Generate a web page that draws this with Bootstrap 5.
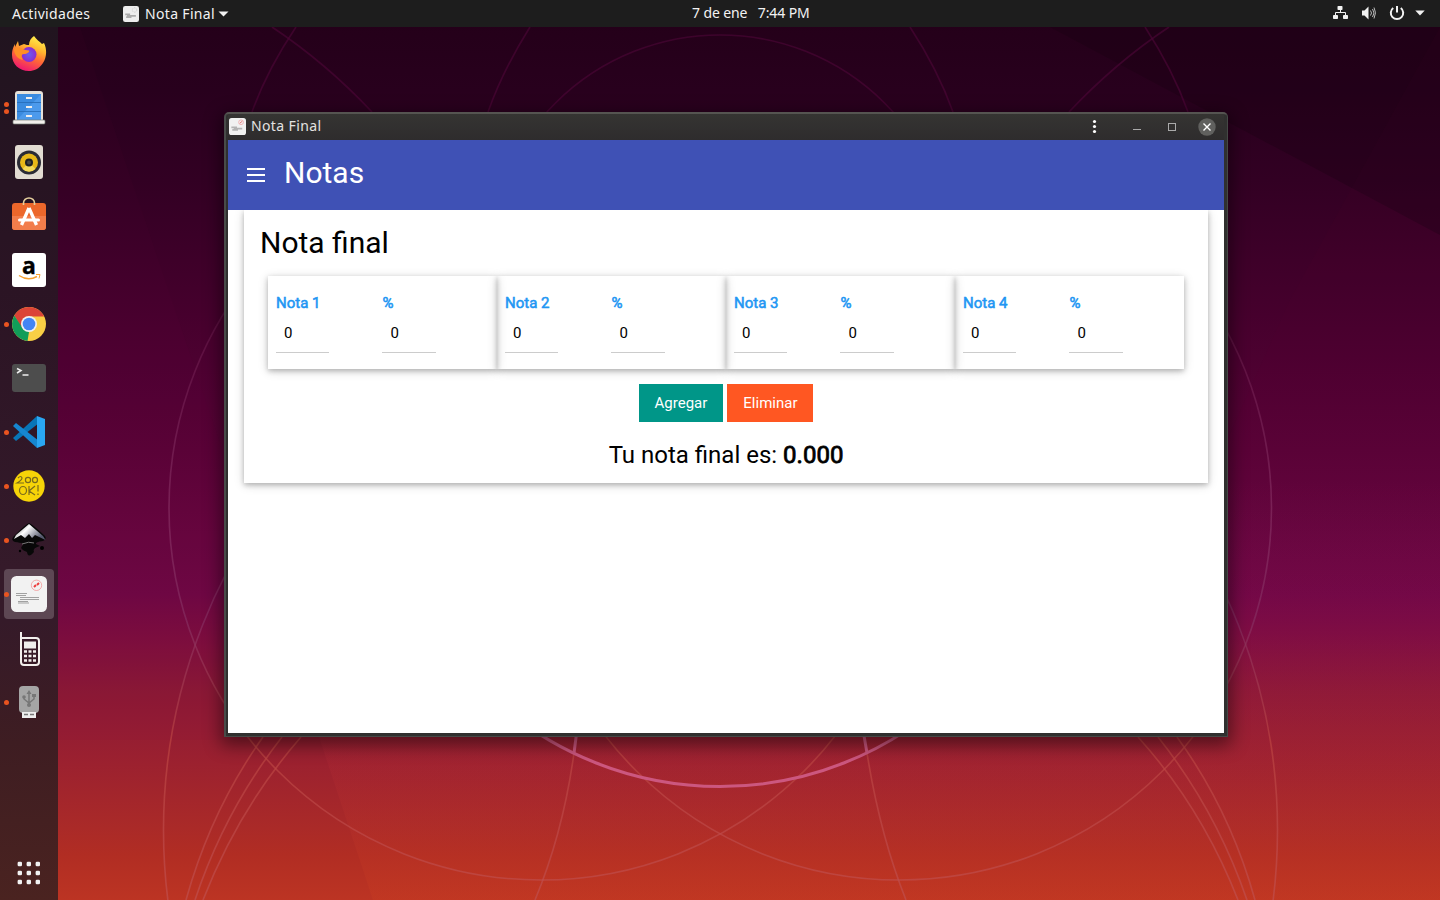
<!DOCTYPE html>
<html lang="es">
<head>
<meta charset="utf-8">
<meta name="viewport" content="width=device-width, initial-scale=1">
<title>Nota Final</title>
<link href="https://cdn.jsdelivr.net/npm/bootstrap@5.3.0/dist/css/bootstrap.min.css" rel="stylesheet">
<style>
body{width:1440px;height:900px;overflow:hidden;background:#24001a;font-family:"Noto Sans","Open Sans",sans-serif;font-size:14px}
svg{display:block;flex:none}
.wallpaper{z-index:0}
.topbar{height:27px;background:#1d1d1d;color:#f2f2f2;z-index:2;line-height:27px}
.topbar .bar-text{letter-spacing:.33px}
.topbar .clock{left:692px;top:-1px;width:118px;letter-spacing:-.12px;white-space:pre}
.dock{width:58px;height:873px;z-index:2;background:linear-gradient(#21141f 0,#2b1424 30%,#351a2a 62%,#351a29 68%,#3e1d22 82%,#4a2320 100%)}
.dock-item{width:58px;height:54px;padding-left:11px}
.dock-item svg{overflow:visible}
.dot{width:5px;height:5px;border-radius:50%;background:#e95420;left:4px}
.dot.one{top:24.500px}.dot.up{top:21px}.dot.down{top:28px}
.active-item::before{content:"";position:absolute;left:4px;top:2px;width:50px;height:50px;border-radius:4px;background:rgba(255,255,255,.2)}
.active-item svg{position:relative}
.desk-window{left:224px;top:112px;width:1004px;height:625px;z-index:3;border-radius:5px 5px 0 0;background:#30302f;border:1px solid #454846;border-left:2px solid #484b49;border-top:2px solid #555451;padding:0 3px 3px 2px;box-shadow:0 5px 18px 3px rgba(0,0,0,.48)}
.titlebar{height:26px;background:linear-gradient(#353432,#2e2c2d);color:#e4e3e1}
.titlebar .caption-text{margin-top:-3px;letter-spacing:.38px}
.titlebar .controls{width:137px}
.app{height:593px;width:996px;background:#fff;color:#000;font-family:Roboto,sans-serif;font-size:15px;line-height:1.5}
.app-header{height:70px;background:#3f51b5;padding-left:16px;position:relative;z-index:2}
.app-header h1{font-size:30px;line-height:45px;margin:-6px 0 0 15px;font-weight:400}
.sheet{display:flow-root;margin:0 16px;padding:0 16px;height:273px;box-shadow:0 2px 5px rgba(0,0,0,.22),0 2px 10px rgba(0,0,0,.16)}
.sheet h2{font-size:30px;line-height:45px;margin:10px 0 11px;font-weight:400}
.grades{margin:0 8px}
.grade{height:93px;padding:15px 8px 0;box-shadow:0 2px 5px rgba(0,0,0,.22),0 2px 10px rgba(0,0,0,.16)}
.grade .col-6+.col-6{margin-left:-.1px}
.grade label{color:#2196f3;line-height:24.500px;height:22.500px;display:block;-webkit-text-stroke:.55px #2196f3}
.grade input{width:50%;height:39px;border:0;border-bottom:1px solid #ccc;padding:8px;border-radius:0;font:15px Roboto,sans-serif;color:#000;background:none;display:block;outline:0}
.grade .col-6+.col-6 input{width:54px}
.actions{margin-top:15px;gap:4px}
.actions .btn{border:0;border-radius:0;padding:8px 16px;font-size:15px;line-height:22px;height:38px;color:#fff}
.btn-add{background:#009688}.btn-del{background:#ff5722}
.result{font-size:24px;line-height:36px;margin-top:15px}
.result span{-webkit-text-stroke:.8px #000}
</style>
</head>
<body class="position-relative m-0">

<svg class="wallpaper position-absolute top-0 start-0" width="1440" height="900" viewBox="0 0 1440 900">
  <defs>
    <linearGradient id="sky" x1="0" y1="0" x2="0" y2="1">
      <stop offset="0" stop-color="#230018"/><stop offset=".1" stop-color="#28001d"/><stop offset=".2" stop-color="#320023"/><stop offset=".35" stop-color="#46002d"/><stop offset=".5" stop-color="#590337"/>
      <stop offset=".66" stop-color="#6e0843"/><stop offset=".71" stop-color="#7c0e3e"/><stop offset=".77" stop-color="#8b1935"/>
      <stop offset=".84" stop-color="#9a2030"/><stop offset=".92" stop-color="#aa2a28"/><stop offset=".95" stop-color="#b12d23"/><stop offset="1" stop-color="#bc3423"/>
    </linearGradient>
    <linearGradient id="facet" gradientUnits="userSpaceOnUse" x1="0" y1="480" x2="0" y2="900">
      <stop offset="0" stop-color="#8a0a55" stop-opacity="0"/><stop offset=".33" stop-color="#8a0a55" stop-opacity=".25"/><stop offset=".62" stop-color="#b92b3c" stop-opacity=".16"/><stop offset="1" stop-color="#d9481f" stop-opacity=".16"/>
    </linearGradient>
    <linearGradient id="ln" gradientUnits="userSpaceOnUse" x1="0" y1="27" x2="0" y2="900">
      <stop offset="0" stop-color="#4a0535" stop-opacity=".65"/><stop offset=".12" stop-color="#4a0535" stop-opacity=".7"/><stop offset=".35" stop-color="#6a1a4c" stop-opacity=".6"/><stop offset=".55" stop-color="#863063" stop-opacity=".65"/><stop offset=".68" stop-color="#863063" stop-opacity=".65"/><stop offset=".82" stop-color="#b9413f" stop-opacity=".75"/><stop offset="1" stop-color="#c05050" stop-opacity=".65"/>
    </linearGradient>
  </defs>
  <rect width="1440" height="900" fill="url(#sky)"/>
  <path d="M1050 27L1440 235V27Z" fill="#160010" opacity=".3"/>
  <path d="M1440 27L1290 300L1200 500H1440Z" fill="#8a0048" opacity=".03"/>
  <path d="M80 27L320 740H58V27Z" fill="#7d0048" opacity=".04"/>
  <path d="M234 480L373 900H1440V480Z" fill="url(#facet)"/>
  <g fill="none" stroke="url(#ln)" stroke-width="1.6">
    <circle cx="541" cy="508" r="372"/><circle cx="899.5" cy="508" r="372"/>
    <circle cx="720.5" cy="830" r="557"/><circle cx="720" cy="268" r="233"/>
    <path d="M272 27Q326 63 372 112M1169 27Q1115 63 1069 112"/>
    <path d="M296 27Q267 70 252 112M1145 27Q1173 70 1188 112"/>
    <path d="M530 27Q503 70 488 112M910 27Q938 70 953 112"/>
    <path d="M263 737Q211 810 186 900M282 737Q225 810 195 900M301 737Q239 808 203 900"/>
    <path d="M1177 737Q1230 810 1255 900M1158 737Q1216 810 1247 900M1138 737Q1202 808 1238 900"/>
    <path d="M574 753Q563 833 535 900M867 753Q880 835 906 900"/>
  </g>
  <g fill="none" stroke="#cc577f" stroke-width="3">
    <path d="M382 448.500A338 338 0 0 0 1058 448.500"/><path d="M577 730L574 753M863 730L867 753"/>
  </g>
</svg>

<header class="topbar position-relative d-flex align-items-center">
  <span class="bar-text" style="margin-left:12px;width:79px">Actividades</span>
  <svg style="margin:0 6px 0 32px" width="16" height="16" viewBox="0 0 36 36"><rect width="36" height="36" rx="5" fill="#ededed"/><circle cx="26" cy="9" r="5" fill="none" stroke="#aaa" stroke-dasharray="3 2"/><path d="M5 19h11M9 22h20M7 25h12" stroke="#aaa" stroke-width="4"/></svg>
  <span class="bar-text" style="width:70px">Nota Final</span>
  <svg style="margin-left:3px" width="11" height="6" viewBox="0 0 11 6"><path d="M.5.500h10L5.500 5.500Z" fill="#f2f2f2"/></svg>
  <span class="clock position-absolute">7 de ene   7:44 PM</span>
  <div class="d-flex align-items-center ms-auto" style="margin:-1px 15px 0 0">
    <svg width="16" height="16" viewBox="0 0 16 16" fill="#f2f2f2"><rect x="5.500" y="1" width="5" height="4" rx=".8"/><rect x="1" y="10" width="5" height="4" rx=".8"/><rect x="11" y="10" width="5" height="4" rx=".8"/><path d="M8.500 5v2.500M3.500 10V7.500h10V10" fill="none" stroke="#f2f2f2"/></svg>
    <svg style="margin-left:13px" width="16" height="16" viewBox="0 0 16 16"><path d="M1 5.500H3.500L7.500 1.500V14.500L3.500 10.500H1Z" fill="#f2f2f2"/><path d="M9.500 5.500q2 2.500 0 5M11.500 4q3 4 0 8M13 2.500q3 5 0 11" fill="none" stroke="#bbb"/></svg>
    <svg style="margin-left:12px" width="16" height="16" viewBox="0 0 16 16"><path d="M4.200 3A6.200 6.200 0 1 0 11.800 3M8 1v6.500" fill="none" stroke="#f2f2f2" stroke-width="2"/></svg>
    <svg style="margin-left:10px" width="10" height="6" viewBox="0 0 10 6"><path d="M.3.500h9.400L5 5.500Z" fill="#f2f2f2"/></svg>
  </div>
</header>

<nav class="dock position-relative d-flex flex-column">
  <div class="dock-item position-relative d-flex align-items-center">
    <svg width="36" height="36" viewBox="0 0 36 36"><defs><linearGradient id="ff" x1=".75" y1="0" x2=".35" y2="1"><stop offset="0" stop-color="#fff44f"/><stop offset=".35" stop-color="#ffb52e"/><stop offset=".6" stop-color="#ff6b35"/><stop offset="1" stop-color="#ef1672"/></linearGradient><radialGradient id="fp"><stop offset="0" stop-color="#6b5cf0"/><stop offset="1" stop-color="#8a2bd0"/></radialGradient></defs><path d="M23 0C25 3 29 6 31 8L33 7C36 13 36 21 32 27C28 33 23 35 18 35C8 35 1 28 1 19C1 13 3 10 4 8L4 11L7 5L8 10L13 8C15 9 17 9 18 9C18 5 20 2 23 0Z" fill="url(#ff)"/><circle cx="18" cy="18.500" r="7.500" fill="url(#fp)"/><path d="M3 13C8 9 11 14 18 14.500C19 16 16 18 13 18C10 18 10 21 12 24C7 23 3 19 3 13Z" fill="#ff8f26"/></svg>
  </div>
  <div class="dock-item position-relative d-flex align-items-center">
    <i class="dot up position-absolute"></i><i class="dot down position-absolute"></i>
    <svg width="36" height="36" viewBox="0 0 36 36"><rect x="4" y="1" width="28" height="31" rx="3" fill="#e6e1d9"/><rect x="6" y="4" width="24" height="26" fill="#4c9aec"/><path d="M6 4H30L6 30Z" fill="#2f82d8" opacity=".6"/><path d="M6 12.500h24M6 21.500h24" stroke="#246bb5" stroke-width=".8"/><path d="M15 8h6M15 17h6M15 26h6" stroke="#eee" stroke-width="2"/><rect x="2" y="30" width="32" height="4" rx="1" fill="#f3f0ec" stroke="#747b75" stroke-width=".7"/></svg>
  </div>
  <div class="dock-item position-relative d-flex align-items-center">
    <svg width="36" height="36" viewBox="0 0 36 36"><rect x="4" y="1" width="28" height="34" rx="3" fill="#e2dcd2"/><circle cx="18" cy="18.500" r="12" fill="#2a2b35"/><circle cx="18" cy="18.500" r="9" fill="#e8b818"/><path d="M11.500 25A9 9 0 0 0 24.500 25L18 18.500Z" fill="#f4d958"/><circle cx="18" cy="18.500" r="4" fill="#1e2025"/><circle cx="18" cy="18.500" r="2" fill="#454545"/></svg>
  </div>
  <div class="dock-item position-relative d-flex align-items-center">
    <svg width="36" height="36" viewBox="0 0 36 36"><rect x="1" y="5" width="34" height="27" rx="3" fill="#ec672b"/><path d="M1 18H35V29a3 3 0 0 1-3 3H4a3 3 0 0 1-3-3Z" fill="#f27d4b"/><path d="M12.500 7V5a5.500 5 0 0 1 11 0v2" fill="none" stroke="#e4cf9d" stroke-width="1.600"/><path d="M18 10L10.500 27M18 10L25.500 27" stroke="#fff" stroke-width="3.300" fill="none"/><path d="M8.500 22h19" stroke="#fff" stroke-width="3" stroke-linecap="round"/></svg>
  </div>
  <div class="dock-item position-relative d-flex align-items-center">
    <svg width="36" height="36" viewBox="0 0 36 36"><rect x="1" y="1" width="34" height="34" rx="3" fill="#fff"/><text x="18" y="22" text-anchor="middle" font-family="Open Sans,sans-serif" font-weight="700" font-size="23" stroke="#000" stroke-width=".4">a</text><path d="M8 23.500Q17 29.500 26 24.500" fill="none" stroke="#f6a030" stroke-width="1.500"/><path d="M25 22.500h4l-1 4" fill="none" stroke="#f6a030"/></svg>
  </div>
  <div class="dock-item position-relative d-flex align-items-center">
    <i class="dot one position-absolute"></i>
    <svg width="36" height="36" viewBox="0 0 36 36"><circle cx="18" cy="18" r="17" fill="#f9cf45"/><path d="M3.300 9.500A17 17 0 0 1 32.700 9.500L32.900 10.500H18L10.600 22.200Z" fill="#db4437"/><path d="M3.300 9.500L11.500 22L18 26L16.500 34.900A17 17 0 0 1 3.300 9.500Z" fill="#119d59"/><circle cx="18" cy="18" r="8" fill="#f0f0f0"/><circle cx="18" cy="18" r="6.300" fill="#4285f4"/></svg>
  </div>
  <div class="dock-item position-relative d-flex align-items-center">
    <svg width="36" height="36" viewBox="0 0 36 36"><rect x="1" y="4" width="34" height="28" rx="3" fill="#4d4d4d"/><path d="M6 8.500l4 2-4 2.500M11.500 15h6" fill="none" stroke="#eee" stroke-width="1.500"/></svg>
  </div>
  <div class="dock-item position-relative d-flex align-items-center">
    <i class="dot one position-absolute"></i>
    <svg width="36" height="36" viewBox="0 0 36 36"><path d="M2 24L5 27L28 9L26 2Z" fill="#0875b7"/><path d="M2 12L5 9L28 27L26 34Z" fill="#1686d0"/><path d="M26 2L34 5V31L26 34Z" fill="#2aa6f2"/></svg>
  </div>
  <div class="dock-item position-relative d-flex align-items-center">
    <i class="dot one position-absolute"></i>
    <svg width="36" height="36" viewBox="0 0 36 36"><circle cx="18" cy="18" r="15.700" fill="#f7d408"/><g fill="none" stroke="#796b1d" stroke-width="1.200"><path d="M7 10q3-3 4 0q0 2-5 5h7"/><ellipse cx="17" cy="12" rx="2.600" ry="2.700"/><ellipse cx="24" cy="12" rx="2.500" ry="2.700"/><ellipse cx="12" cy="22.500" rx="3.500" ry="4"/><path d="M18 18v9M24 18l-6 5 6 4M27 17v6.500M27 25.500v1.500"/></g></svg>
  </div>
  <div class="dock-item position-relative d-flex align-items-center">
    <i class="dot one position-absolute"></i>
    <svg width="36" height="36" viewBox="0 0 36 36"><defs><linearGradient id="ink" x1="0" x2="1" y2=".5"><stop offset="0" stop-color="#444"/><stop offset=".45" stop-color="#fff"/><stop offset="1" stop-color="#55596d"/></linearGradient></defs><path d="M18 1Q21 2 34 14Q36 17 32 19Q24 20 25 22L29 24Q21 26 23 30Q17 37 16 30Q8 27 11 24Q15 21 4 20Q-1 18 3 14Q15 2 18 1Z" fill="#080808"/><path d="M18 2L32 14L34.500 18L24 13L21 16L18 12L14 16L10 13L3 17L5 13Z" fill="url(#ink)"/><path d="M11 22q7-3 12-1" fill="none" stroke="#777"/><circle cx="9" cy="29" r="1.200"/><circle cx="31" cy="26" r="2"/></svg>
  </div>
  <div class="dock-item active-item position-relative d-flex align-items-center">
    <i class="dot one position-absolute"></i>
    <svg width="36" height="36" viewBox="0 0 36 36"><rect width="36" height="36" rx="5.500" fill="#f2f2f2"/><circle cx="25.500" cy="9.300" r="5.200" fill="none" stroke="#f28c8c" stroke-width=".7"/><path d="M23 11l2-2M26 9l2-2" stroke="#ed3d3d" stroke-width="2"/><path d="M5 17.500h11M5 19.500h10M9 21.500h19M9 23.500h19M7 25.500h10M7 27h11" stroke="#a1a1a1" stroke-width="1"/></svg>
  </div>
  <div class="dock-item position-relative d-flex align-items-center">
    <svg style="margin-top:2px" width="36" height="36" viewBox="0 0 36 36"><path d="M10 1V31Q10 34 13 34H25Q28 34 28 31V10Q28 7 25 7H10" fill="none" stroke="#f3f0ed" stroke-width="2"/><rect x="13" y="10.500" width="12" height="7" fill="#efeeec"/><path d="M13 20.500h12M13 25h12M13 29.500h12" stroke="#f3f0ed" stroke-width="2.600" stroke-dasharray="3 1.500"/></svg>
  </div>
  <div class="dock-item position-relative d-flex align-items-center">
    <i class="dot one position-absolute"></i>
    <svg width="36" height="36" viewBox="0 0 36 36"><rect x="8" y="2" width="20" height="27" rx="4" fill="#a5a5a5"/><path d="M18 8v14M13 12v3l5 4 5-4v-3" fill="none" stroke="#777" stroke-width="1.500"/><path d="M18 6l-2.500 4h5ZM21 10h4v3h-4Z" fill="#777"/><circle cx="13" cy="13" r="1.800" fill="#777"/><circle cx="18" cy="21" r="2" fill="#777"/><rect x="11" y="28" width="14" height="6" fill="#eee"/><path d="M13 30.500h4M19 30.500h4" stroke="#777" stroke-width="1.300"/></svg>
  </div>
  <div class="mt-auto" style="padding:0 0 14px 17px">
    <svg width="24" height="26" viewBox="0 0 24 26" fill="#f2f2f2"><g id="dots"><rect x=".6" y="1.800" width="4.400" height="4.400" rx="1.300"/><rect x="9.600" y="1.800" width="4.400" height="4.400" rx="1.300"/><rect x="18.600" y="1.800" width="4.400" height="4.400" rx="1.300"/></g><use href="#dots" y="9"/><use href="#dots" y="18"/></svg>
  </div>
</nav>

<section class="desk-window position-absolute">
  <div class="titlebar d-flex align-items-center">
    <svg style="margin:-2px 5px 0 1px" width="17" height="17" viewBox="0 0 36 36"><rect width="36" height="36" rx="5.500" fill="#f1f1f1"/><circle cx="25.500" cy="9" r="5" fill="none" stroke="#ef9e9e" stroke-width="1.500"/><path d="M23 11l5-4" stroke="#e46b6b" stroke-width="2"/><path d="M5 20h12M7 25h12M10 22.500h18" stroke="#b3b3b3" stroke-width="3.500"/></svg>
    <span class="caption-text">Nota Final</span>
    <svg class="controls ms-auto" height="26" viewBox="0 0 137 26"><g fill="#fff"><circle cx="7.500" cy="7.500" r="1.600"/><circle cx="7.500" cy="12.500" r="1.600"/><circle cx="7.500" cy="17.500" r="1.600"/></g><path d="M46 15.500h8" stroke="#aaa"/><rect x="81.500" y="9.500" width="7" height="7" fill="none" stroke="#aaa"/><circle cx="120" cy="13" r="8.700" fill="#60605e"/><path d="M116.500 9.500l7 7M123.500 9.500l-7 7" stroke="#fff" stroke-width="1.400"/></svg>
  </div>
  <main class="app">
    <header class="app-header d-flex align-items-center text-white">
      <svg width="25" height="24" viewBox="0 0 25 24"><path d="M3 6h18M3 12h18M3 18h18" stroke="#fff" stroke-width="2"/></svg>
      <h1>Notas</h1>
    </header>
    <section class="sheet">
      <h2>Nota final</h2>
      <div class="grades row g-0">
        <div class="grade col-3"><div class="row g-0"><div class="col-6"><label>Nota 1</label><input value="0"></div><div class="col-6"><label>%</label><input value="0"></div></div></div>
        <div class="grade col-3"><div class="row g-0"><div class="col-6"><label>Nota 2</label><input value="0"></div><div class="col-6"><label>%</label><input value="0"></div></div></div>
        <div class="grade col-3"><div class="row g-0"><div class="col-6"><label>Nota 3</label><input value="0"></div><div class="col-6"><label>%</label><input value="0"></div></div></div>
        <div class="grade col-3"><div class="row g-0"><div class="col-6"><label>Nota 4</label><input value="0"></div><div class="col-6"><label>%</label><input value="0"></div></div></div>
      </div>
      <div class="actions d-flex justify-content-center">
        <button class="btn btn-add">Agregar</button>
        <button class="btn btn-del">Eliminar</button>
      </div>
      <div class="result text-center">Tu nota final es: <span>0.000</span></div>
    </section>
  </main>
</section>
<script src="https://cdn.jsdelivr.net/npm/bootstrap@5.3.0/dist/js/bootstrap.bundle.min.js"></script>
</body>
</html>
